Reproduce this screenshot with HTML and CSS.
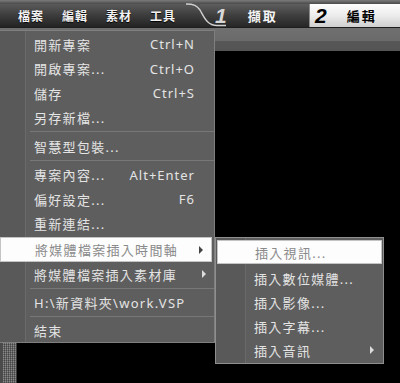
FILE: index.html
```html
<!DOCTYPE html>
<html lang="zh-Hant">
<head>
    <meta charset="UTF-8">
    <meta name="viewport" content="width=device-width, initial-scale=1.0">
    <title>編輯</title>
    <link rel="stylesheet" href="styles.css">
</head>
<body>
    <div class="app">
        <header class="topbar">
            <nav class="menubar">
                <span>檔案</span>
                <span>編輯</span>
                <span>素材</span>
                <span>工具</span>
            </nav>
            <div class="tab tab-capture"><b class="num">1</b><span>擷取</span></div>
            <div class="tab tab-edit"><b class="num">2</b><span>編輯</span></div>
            <svg class="curve" width="40" height="28" viewBox="0 0 40 28">
                <path d="M0 4 C8 4 11 5.5 14 10 C18 17 21 25.5 31 25.5 L40 25.5" fill="none" stroke="#cfcfcf" stroke-width="1.4"/>
            </svg>
        </header>
        <div class="toolstrip"></div>
        <div class="workspace">
            <div class="scroll"></div>
            <div class="canvas"></div>
        </div>

        <ul class="menu file-menu">
            <li class="item"><span>開新專案</span><span class="key">Ctrl+N</span></li>
            <li class="item"><span>開啟專案...</span><span class="key">Ctrl+O</span></li>
            <li class="item"><span>儲存</span><span class="key">Ctrl+S</span></li>
            <li class="item"><span>另存新檔...</span></li>
            <li class="sep"></li>
            <li class="item"><span>智慧型包裝...</span></li>
            <li class="sep"></li>
            <li class="item"><span>專案內容...</span><span class="key">Alt+Enter</span></li>
            <li class="item"><span>偏好設定...</span><span class="key">F6</span></li>
            <li class="item"><span>重新連結...</span></li>
            <li class="item active"><span>將媒體檔案插入時間軸</span><i class="arrow"></i></li>
            <li class="item"><span>將媒體檔案插入素材庫</span><i class="arrow"></i></li>
            <li class="sep"></li>
            <li class="item"><span>H:\新資料夾\work.VSP</span></li>
            <li class="sep"></li>
            <li class="item last"><span>結束</span></li>
        </ul>

        <ul class="menu sub-menu">
            <li class="item active"><span>插入視訊...</span></li>
            <li class="item"><span>插入數位媒體...</span></li>
            <li class="item"><span>插入影像...</span></li>
            <li class="item"><span>插入字幕...</span></li>
            <li class="item"><span>插入音訊</span><i class="arrow"></i></li>
        </ul>
    </div>
</body>
</html>
```

FILE: styles.css
```css
body {
    margin: 0;
    background: #000;
    font-family: "Noto Sans", "Noto Sans CJK TC", sans-serif;
}
.app {
    position: relative;
    width: 400px;
    height: 383px;
    overflow: hidden;
    display: flex;
    flex-direction: column;
}

/* top bar */
.topbar {
    position: relative;
    display: flex;
    height: 28px;
    box-sizing: border-box;
    padding-top: 4px;
    border-bottom: 1px solid #1e1e1e;
    background: linear-gradient(#7c7c7c, #4a4a4a 4px, #3a3a3a);
}
.menubar {
    width: 200px;
    display: flex;
    gap: 18px;
    padding-left: 18px;
    box-sizing: border-box;
    align-items: center;
    background: linear-gradient(#5a5a5a, #3c3c3c 50%, #232323);
    font-family: "Noto Sans CJK TC", sans-serif;
    font-size: 12px;
    font-weight: bold;
    letter-spacing: 1px;
    color: #f2f2f2;
    text-shadow: 0 1px 1px #000;
}
.tab {
    display: flex;
    align-items: center;
    font-family: "Noto Sans CJK TC", sans-serif;
    font-size: 13px;
    font-weight: bold;
    letter-spacing: 2px;
}
.tab .num {
    font-family: "Liberation Sans", sans-serif;
    font-size: 21px;
    font-style: italic;
    letter-spacing: 0;
}
.tab-capture {
    width: 110px;
    box-sizing: border-box;
    padding-left: 15px;
    gap: 21px;
    color: #f4f4f4;
    border-right: 1px solid #8a8a8a;
    background: linear-gradient(#5e5e5e, #3e3e3e 50%, #262626);
}
.tab-capture .num {
    color: #d8d8d8;
}
.tab-edit {
    flex: 1;
    padding-left: 5px;
    gap: 20px;
    color: #000;
    background: linear-gradient(#fdfdfd, #ececec 50%, #cfcfcf);
}
.curve {
    position: absolute;
    left: 186px;
    top: 0;
}

.toolstrip {
    height: 23px;
    background: linear-gradient(#707070, #6a6a6a 13px, #575757 13px, #545454);
}
.workspace {
    flex: 1;
    display: flex;
}
.scroll {
    width: 17px;
    box-sizing: border-box;
    border-left: 3px solid #4b4b4b;
    border-right: 1px solid #3a3a3a;
    background:
        repeating-linear-gradient(0deg, rgba(0, 0, 0, 0.25) 0 1px, transparent 1px 2px),
        repeating-linear-gradient(90deg, #8a8a8a 0 1px, #5c5c5c 1px 2px);
}
.canvas {
    flex: 1;
    background: #000;
}

/* menus */
.menu {
    position: absolute;
    margin: 0;
    padding: 1px 0 0;
    list-style: none;
    box-sizing: border-box;
    border: 1px solid #7f7f7f;
    font-size: 13px;
    letter-spacing: 1.3px;
    color: #e4e4e4;
}
.file-menu {
    left: 0;
    top: 30px;
    width: 215px;
    border-left: none;
    background:
        linear-gradient(90deg, #595959 25px, #6a6a6a 25px 26px, #5e5e5e 26px);
}
.sub-menu {
    left: 215px;
    top: 237px;
    width: 169px;
    height: 127px;
    border-color: #8e8e8e;
    background:
        linear-gradient(90deg, #595959 29px, #6a6a6a 29px 30px, #5e5e5e 30px);
}
.item {
    display: flex;
    align-items: center;
    height: 24.5px;
    padding: 0 19px 0 34px;
    white-space: nowrap;
}
.sub-menu .item {
    height: 24px;
    padding-left: 38px;
    padding-right: 9px;
}
.item.last {
    height: 23px;
}
.key {
    margin-left: auto;
    letter-spacing: 1px;
}
.sep {
    height: 1px;
    margin: 1px 0 2px 30px;
    background: #777;
}
.item.active {
    height: 25px;
    box-sizing: border-box;
    margin: 1px 2px 0 0;
    background: #fdfdfd;
    border: 1px solid #c4c4c4;
    color: #8a8a8a;
}
.sub-menu .item.active {
    height: 24px;
    margin: 1px 1px 2px 1px;
    padding-left: 37px;
}
.arrow {
    margin-left: auto;
    width: 0;
    height: 0;
    border-left: 4px solid #dcdcdc;
    border-top: 4px solid transparent;
    border-bottom: 4px solid transparent;
    margin-right: -11px;
}
.active .arrow {
    border-left-color: #444;
}
.sub-menu .arrow {
    margin-right: 0;
}
```
